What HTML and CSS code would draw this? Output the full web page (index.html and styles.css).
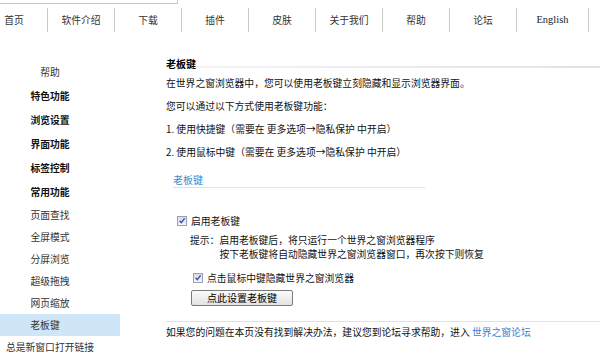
FILE: index.html
```html
<!DOCTYPE html>
<html lang="zh-CN">
<head>
  <meta charset="UTF-8">
  <title>老板键 - 世界之窗浏览器帮助</title>
  <link rel="stylesheet" href="styles.css">
</head>
<body>
  <div class="search-stub"></div>
  <ul class="nav">
    <li class="first">首页</li>
    <li>软件介绍</li>
    <li>下载</li>
    <li>插件</li>
    <li>皮肤</li>
    <li>关于我们</li>
    <li>帮助</li>
    <li>论坛</li>
    <li class="en">English</li>
  </ul>

  <div class="page">
    <ul class="sidebar">
      <li class="top">帮助</li>
      <li class="group">特色功能</li>
      <li class="group">浏览设置</li>
      <li class="group">界面功能</li>
      <li class="group">标签控制</li>
      <li class="group">常用功能</li>
      <li class="sub">页面查找</li>
      <li class="sub">全屏模式</li>
      <li class="sub">分屏浏览</li>
      <li class="sub">超级拖拽</li>
      <li class="sub">网页缩放</li>
      <li class="sub active">老板键</li>
      <li class="sub">总是新窗口打开链接</li>
    </ul>

    <div class="main">
      <div class="title-row">
        <h3>老板键</h3>
        <div class="rule"></div>
      </div>
      <p>在世界之窗浏览器中，您可以使用老板键立刻隐藏和显示浏览器界面。</p>
      <p>您可以通过以下方式使用老板键功能：</p>
      <p>1. 使用快捷键（需要在 更多选项→隐私保护 中开启）</p>
      <p>2. 使用鼠标中键（需要在 更多选项→隐私保护 中开启）</p>

      <div class="panel">
        <h4>老板键</h4>
        <div class="check-row first-check">
          <span class="checkbox">
            <svg width="8" height="8" viewBox="0 0 8 8"><path d="M1.6 3.8l1.7 1.9L6.6 1.4" fill="none" stroke="#2d56c4" stroke-width="1.5"/></svg>
          </span>
          <span>启用老板键</span>
        </div>
        <div class="tip">
          <span>提示：</span>
          <div>
            <div>启用老板键后，将只运行一个世界之窗浏览器程序</div>
            <div>按下老板键将自动隐藏世界之窗浏览器窗口，再次按下则恢复</div>
          </div>
        </div>
        <div class="check-row second-check">
          <span class="checkbox">
            <svg width="8" height="8" viewBox="0 0 8 8"><path d="M1.6 3.8l1.7 1.9L6.6 1.4" fill="none" stroke="#2d56c4" stroke-width="1.5"/></svg>
          </span>
          <span>点击鼠标中键隐藏世界之窗浏览器</span>
        </div>
        <button class="button">点此设置老板键</button>
      </div>

      <div class="footer">
        如果您的问题在本页没有找到解决办法，建议您到论坛寻求帮助，进入 <a href="#">世界之窗论坛</a>
      </div>
    </div>
  </div>
</body>
</html>
```

FILE: styles.css
```css
body {
  margin: 0;
  font-family: "Noto Sans CJK SC", sans-serif;
  font-size: 9.8px;
  color: #111;
  background-color: #fff;
  overflow: hidden;
}
ul {
  list-style: none;
  margin: 0;
  padding: 0;
}
.search-stub {
  width: 177px;
  height: 3px;
  border-right: 1px solid #c8c8c8;
  border-bottom: 1px solid #c8c8c8;
}
.nav {
  display: flex;
  height: 36px;
}
.nav li {
  width: 66px;
  height: 24px;
  margin-top: 4px;
  line-height: 24px;
  text-align: center;
  border-right: 1px solid #c8c8c8;
  color: #333;
  flex-shrink: 0;
}
.nav li.first {
  margin-left: -19px;
}
.nav li.en {
  width: 71px;
  font-family: "Liberation Serif", serif;
  font-size: 10.5px;
  color: #222;
}
.page {
  display: flex;
}
.sidebar {
  width: 120px;
  padding-top: 20px;
  flex-shrink: 0;
}
.sidebar li {
  text-align: center;
  padding-right: 20px;
  white-space: nowrap;
  color: #333;
}
.sidebar .top,
.sidebar .group {
  line-height: 24px;
}
.sidebar .group {
  font-weight: bold;
  color: #111;
}
.sidebar .sub {
  line-height: 22px;
}
.sidebar .active {
  background-color: #cfe6f8;
  padding-right: 30px;
}
.main {
  margin-left: 46px;
  width: 434px;
  padding-top: 18px;
}
.title-row {
  display: flex;
  margin-bottom: 2px;
}
.title-row h3 {
  margin: 0;
  font-size: 10px;
  line-height: 12px;
  font-weight: bold;
  color: #000;
}
.rule {
  flex: 1;
  height: 2px;
  align-self: flex-end;
  margin-bottom: 2px;
  background: linear-gradient(to right, #f4f4f4, #e2e2e2);
}
.main p {
  margin: 0;
  line-height: 23px;
}
.panel {
  margin-left: 7px;
  margin-top: 9px;
}
.panel h4 {
  margin: 0;
  width: 252px;
  font-size: 10px;
  line-height: 14px;
  font-weight: normal;
  color: #3a8ad0;
  border-bottom: 1px solid #dbe5ee;
}
.check-row {
  display: flex;
  align-items: center;
  height: 14px;
  line-height: 14px;
}
.first-check {
  margin-top: 26px;
  margin-left: 4px;
}
.second-check {
  margin-top: 10px;
  margin-left: 20px;
}
.checkbox {
  width: 8px;
  height: 8px;
  border: 1px solid #9aa3ad;
  background: linear-gradient(#dcdcdc, #f7f7f7);
  margin-right: 4px;
  display: flex;
}
.tip {
  display: flex;
  margin-top: 5px;
  margin-left: 17px;
  line-height: 14px;
}
.button {
  display: block;
  margin-top: 5px;
  margin-left: 18px;
  width: 102px;
  height: 16px;
  padding: 0;
  font-family: "Noto Sans CJK SC", sans-serif;
  font-size: 10px;
  line-height: 14px;
  color: #000;
  border: 1px solid #7a7a7a;
  border-radius: 2px;
  background: linear-gradient(#fbfbfb, #e2e2e2);
}
.footer {
  margin-top: 15px;
  border-top: 1px solid #e2e2e2;
  line-height: 20px;
}
.footer a {
  color: #3a7fd0;
  text-decoration: none;
}
```
